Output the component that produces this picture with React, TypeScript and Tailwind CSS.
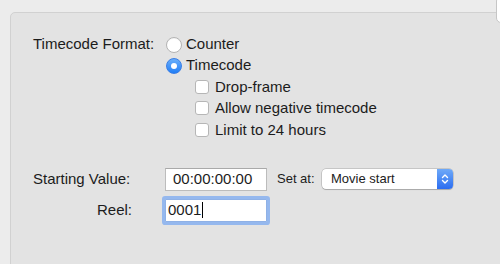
import React from 'react';

const font = { fontFamily: '"Liberation Sans", Arial, sans-serif' };

function Radio({ checked }: { checked?: boolean }) {
  if (checked) {
    return (
      <span className="flex h-4 w-4 items-center justify-center rounded-full border border-[#3a7ee6] bg-gradient-to-b from-[#68aefa] to-[#1f7ef6]">
        <span className="h-[6px] w-[6px] rounded-full bg-white" />
      </span>
    );
  }
  return <span className="h-4 w-4 rounded-full border border-[#b3b3b3] bg-white shadow-[inset_0_1px_0_rgba(0,0,0,0.04)]" />;
}

function Checkbox({ label }: { label: string }) {
  return (
    <div className="ml-[162px] flex h-[21.5px] items-center">
      <span className="h-[14px] w-[14px] rounded-[3px] border border-[#b6b6b6] bg-white" />
      <span className="ml-[6px]">{label}</span>
    </div>
  );
}

export default function App() {
  return (
    <div className="relative h-[264px] w-[500px] overflow-hidden bg-[#ececec] pl-[10px] pt-[12px] text-[15px] text-[#1c1c1c]" style={font}>
      <div className="h-[280px] w-[520px] rounded-[5px] border border-[#d1d1d1] bg-[#e3e3e3] pl-[22px] pt-[21px]">
        <div className="flex h-[21px] items-center">
          <span className="w-[133px]">Timecode Format:</span>
          <Radio />
          <span className="ml-[4px]">Counter</span>
        </div>
        <div className="ml-[133px] flex h-[21px] items-center">
          <Radio checked />
          <span className="ml-[4px]">Timecode</span>
        </div>
        <Checkbox label="Drop-frame" />
        <Checkbox label="Allow negative timecode" />
        <Checkbox label="Limit to 24 hours" />

        <div className="mt-[27px] flex h-[23px] items-center">
          <span className="w-[132px]">Starting Value:</span>
          <div className="flex h-[23px] w-[102px] items-center border border-[#bcbcbc] border-t-[#a9a9a9] bg-white pl-[7px]">00:00:00:00</div>
          <span className="ml-[10px] w-[45px] text-[13px]">Set at:</span>
          <div className="flex h-[20px] w-[131px] items-center rounded-[4px] bg-white text-[13px] shadow-[0_0_0_0.5px_rgba(0,0,0,0.25),0_1px_1px_rgba(0,0,0,0.15)]">
            <span className="flex-1 pl-[9px]">Movie start</span>
            <span className="flex h-full w-[16px] items-center justify-center rounded-r-[4px] bg-gradient-to-b from-[#6fa9f8] to-[#2b6cf0]">
              <svg width="8" height="12" viewBox="0 0 8 12" fill="none" stroke="white" strokeWidth="1.4" strokeLinecap="round" strokeLinejoin="round">
                <path d="M1.5 4.5 L4 2 L6.5 4.5" />
                <path d="M1.5 7.5 L4 10 L6.5 7.5" />
              </svg>
            </span>
          </div>
        </div>

        <div className="mt-[8px] flex h-[23px] items-center">
          <span className="w-[99px] text-right">Reel:</span>
          <div className="ml-[33px] flex h-[23px] w-[102px] items-center rounded-[1px] border border-[#8fb1e6] bg-white pl-[2px] ring-[3px] ring-[#95b8ee]">
            <span>0001</span>
            <span className="ml-[1px] h-[16px] w-px bg-black" />
          </div>
        </div>
      </div>
      <div className="absolute left-[496px] top-[-4px] h-[27px] w-[12px] rounded-[5px] border border-[#c6c6c6] bg-white" />
    </div>
  );
}
